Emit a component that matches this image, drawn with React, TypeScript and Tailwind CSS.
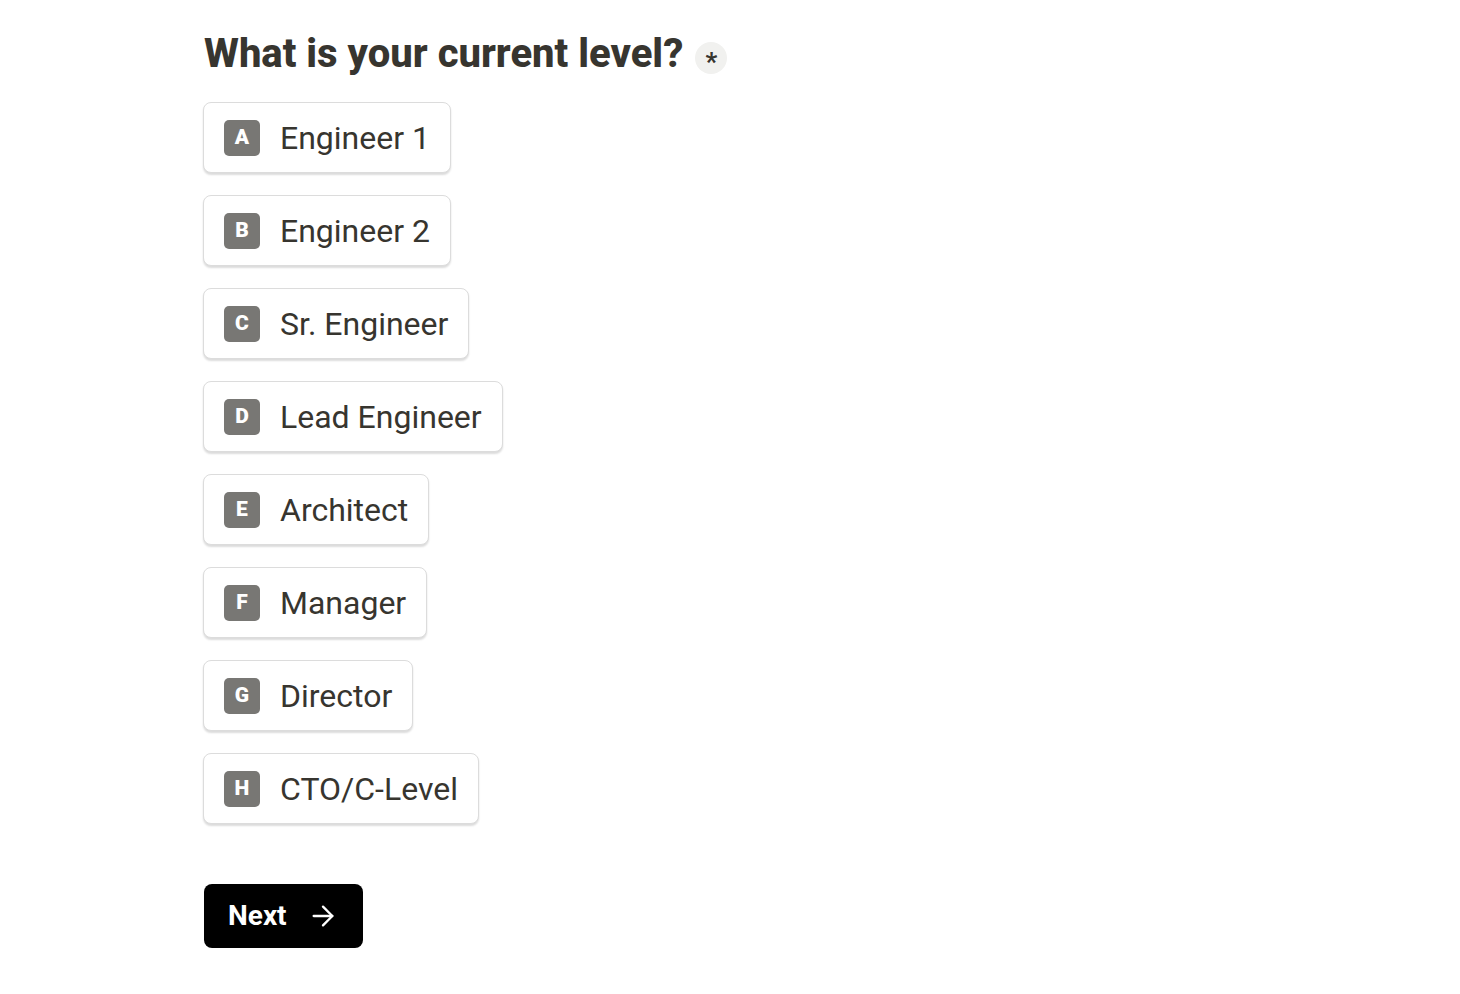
import { ArrowRight } from "lucide-react";

const options = [
  { key: "A", label: "Engineer 1" },
  { key: "B", label: "Engineer 2" },
  { key: "C", label: "Sr. Engineer" },
  { key: "D", label: "Lead Engineer" },
  { key: "E", label: "Architect" },
  { key: "F", label: "Manager" },
  { key: "G", label: "Director" },
  { key: "H", label: "CTO/C-Level" },
];

const App = () => {
  return (
    <div className="min-h-screen bg-white font-['Roboto',sans-serif] text-[#37352f]">
      <div className="pl-[204px] pt-[29px]">
        <h1 className="flex items-center gap-3 text-[40px] font-extrabold leading-[50px]">
          What is your current level?
          <span className="mt-2 flex size-8 items-center justify-center rounded-full bg-[#f1f1ef] text-[26px] font-bold leading-none">
            <span className="mt-2">*</span>
          </span>
        </h1>

        <div className="mt-[23px] -ml-px flex flex-col items-start gap-[22px]">
          {options.map((o) => (
            <button
              key={o.key}
              className="flex h-[71px] items-center gap-5 rounded-lg border border-[#dcdcdc] bg-white pl-5 pr-5 shadow-[0_2px_2px_rgba(0,0,0,0.14)]"
            >
              <span className="flex size-9 items-center justify-center rounded-[5px] bg-[#787774] pt-px text-[21px] font-black text-white">
                {o.key}
              </span>
              <span className="text-[32px] leading-none text-[#37352f]">{o.label}</span>
            </button>
          ))}
        </div>

        <button className="mt-[60px] flex h-16 w-[159px] items-center gap-5 rounded-lg bg-black pl-6 text-[28px] font-bold text-white">
          Next
          <ArrowRight className="size-8" strokeWidth={1.75} />
        </button>
      </div>
    </div>
  );
};

export default App;
